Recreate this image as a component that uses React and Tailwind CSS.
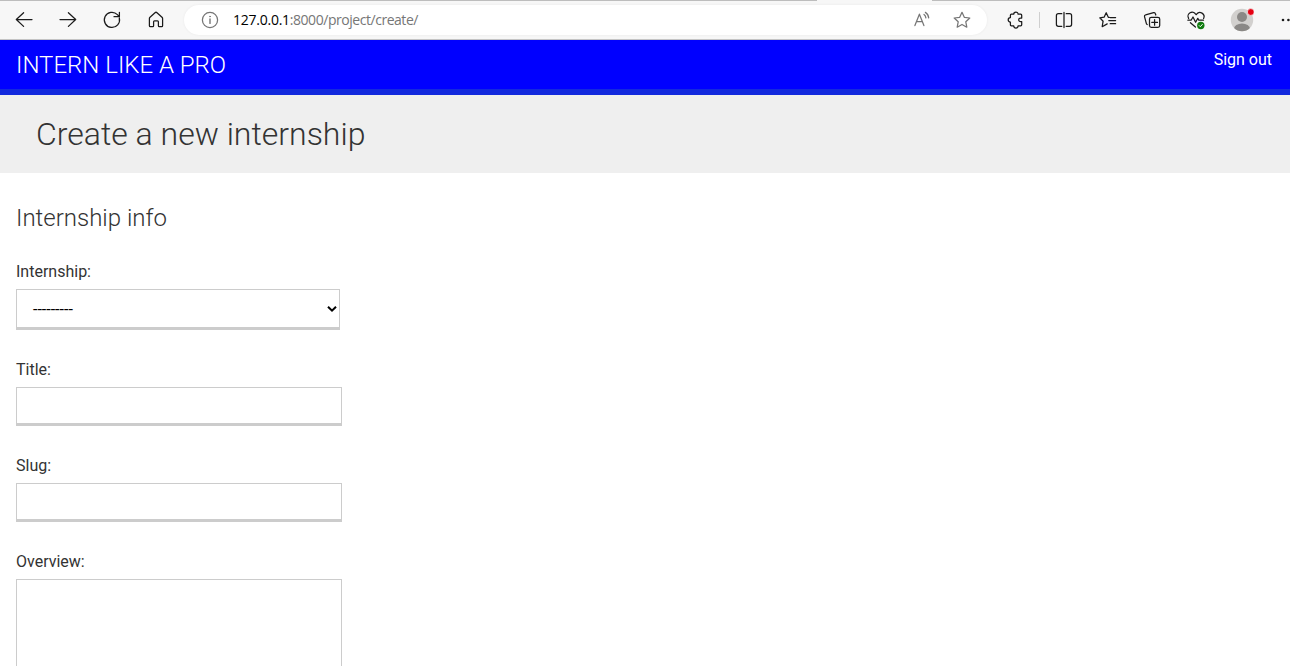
import React from 'react';

function Icon({ children, className = 'text-[#1b1b1b]', label }) {
  return (
    <button type="button" aria-label={label} className={`flex h-9 w-11 shrink-0 items-center justify-center ${className}`}>
      <svg viewBox="0 0 24 24" className="size-6" fill="none" stroke="currentColor" strokeWidth="1.25" strokeLinecap="round" strokeLinejoin="round">
        {children}
      </svg>
    </button>
  );
}

const starPath =
  'M12 4.3l2.3 5 5.5.7-4 3.8 1 5.4-4.8-2.7-4.8 2.7 1-5.4-4-3.8 5.5-.7z';

function Toolbar() {
  return (
    <div className="h-10 w-[1290px] shrink-0 border-b border-[#c4c4c4] bg-[#f7f7f7]">
      <div className="flex h-px">
        <div className="w-[817px] bg-[#bdbdbd]" />
        <div className="w-[115px] bg-[#f7f7f7]" />
        <div className="grow bg-[#bdbdbd]" />
      </div>
      <div className="flex h-[38px] items-center pl-0.5">
        <Icon label="Back">
          <path d="M20 11.5H4.3M11.6 4.7L4.3 11.5l7.3 6.9" />
        </Icon>
        <Icon label="Forward">
          <path d="M4 11.5h15.7M12.4 4.7l7.3 6.8-7.3 6.9" />
        </Icon>
        <Icon label="Refresh">
          <path d="M19.3 10a7.6 7.6 0 1 1-1.9-3.4l1.9 2M19.4 4.3v4.4H14" />
        </Icon>
        <Icon label="Home">
          <path d="M5.4 10.6c0-.6.2-1 .6-1.4l5-4.5a1.5 1.5 0 0 1 2 0l5 4.5c.4.4.6.8.6 1.4v7.2c0 .5-.4.9-.9.9h-2.4c-.5 0-.9-.4-.9-.9v-4c0-.5-.4-.9-.9-.9h-3c-.5 0-.9.4-.9.9v4c0 .5-.4.9-.9.9H6.3a.9.9 0 0 1-.9-.9z" />
        </Icon>
        <div className="ml-1.5 flex h-[30px] w-[803px] shrink-0 items-center rounded-full bg-white pl-1 pr-[3px] shadow-[0_0_3px_rgba(0,0,0,0.06)]">
          <Icon label="Site information" className="text-[#767676]">
            <circle cx="12" cy="12" r="7.6" />
            <path d="M12 11v4.4" strokeWidth="1.4" />
            <circle cx="12" cy="8.6" r=".5" fill="currentColor" strokeWidth=".6" />
          </Icon>
          <div className="ml-[1px] grow whitespace-nowrap font-['Open_Sans','Noto_Sans',sans-serif] text-[14px] leading-5 text-[#767676]">
            <span className="tracking-[-0.25px] text-black">127.0.0.1</span>
            <span className="tracking-[-0.46px]">:8000/project/create/</span>
          </div>
          <div className="flex shrink-0">
            <Icon label="Read aloud" className="-mr-1 text-[#767676]">
              <path d="M4.9 17.6L9.4 6.2l4.5 11.4M6.5 13.7h5.8M14 6.4c1 .7 1.7 1.9 1.9 3.4M15.4 4.4c1.9 1.2 3.1 3.2 3.3 5.5" />
            </Icon>
            <Icon label="Add to favorites" className="text-[#767676]">
              <path d={starPath} />
            </Icon>
          </div>
        </div>
        <Icon label="Extensions" className="ml-1.5 text-[#1b1b1b]">
          <path d="M8.4 6.2h2.3a2.2 2.2 0 0 1 4.4 0h2.6c.6 0 1 .4 1 1V10h-1.2a1.8 1.8 0 0 0 0 3.6h1.2v3.2c0 .6-.4 1-1 1h-2.6a2.2 2.2 0 0 1-4.4 0H8.4c-.6 0-1-.4-1-1V14a2.2 2.2 0 0 1 0-4.4V7.2c0-.6.4-1 1-1z" />
        </Icon>
        <div className="ml-0.5 mr-0.5 h-4 w-px bg-[#cfcfcf]" />
        <Icon label="Split screen">
          <path d="M9.8 5.7H6.4c-1.1 0-2 .9-2 2v8.6c0 1.1.9 2 2 2h3.4M14.2 5.7h3.4c1.1 0 2 .9 2 2v8.6c0 1.1-.9 2-2 2h-3.4M12 4.4v15.2" />
        </Icon>
        <Icon label="Favorites">
          <path d="M13.2 9.3h-.9L10.2 4.7 8.1 9.2l-4.3.6 3.3 3.4-.9 5.5 5-2.8M14.2 9.5h5.4M12.8 12.6h6.8M14.2 15.7h5.4" />
        </Icon>
        <Icon label="Collections">
          <path d="M15.8 7l-.4-1.3a1.5 1.5 0 0 0-1.8-1.1L5.6 6.8a1.5 1.5 0 0 0-1.1 1.8l1.9 7c.1.4.4.7.8.9" />
          <rect x="9.5" y="9.3" width="10.2" height="10" rx="1.8" />
          <path d="M14.6 11.5v5.7M11.8 14.4h5.7" />
        </Icon>
        <Icon label="Browser essentials">
          <path d="M4.6 10.4a4.1 4.1 0 0 1 7.1-4.2l.4.5.5-.5a4.1 4.1 0 0 1 7 4.2M3.9 12.2h3.2L9 9l2.6 5.3 2.2-4 1 1.9h4.7M6.4 14.7l5 4.3" />
          <circle cx="16.8" cy="17.5" r="3.7" fill="#107c10" stroke="none" />
          <path d="M15.2 17.6l1.1 1.1 2-2.2" stroke="#fff" strokeWidth="1" />
        </Icon>
        <button type="button" aria-label="Profile" className="ml-0.5 flex h-9 w-11 shrink-0 items-center justify-center">
          <svg viewBox="0 0 24 24" className="size-6">
            <defs>
              <clipPath id="avatar">
                <circle cx="12" cy="12" r="11.2" />
              </clipPath>
            </defs>
            <circle cx="12" cy="12" r="11.2" fill="#d2d0ce" />
            <circle cx="12" cy="9" r="5" fill="#8a8886" />
            <ellipse cx="12" cy="20.6" rx="8" ry="5.2" fill="#8a8886" clipPath="url(#avatar)" />
            <circle cx="20.8" cy="4" r="3.4" fill="#e60012" stroke="#f7f7f7" strokeWidth=".7" />
          </svg>
        </button>
        <button type="button" aria-label="Settings and more" className="ml-[17px] flex h-9 w-[9px] shrink-0 items-center overflow-hidden">
          <svg viewBox="0 0 14 4" className="h-1 w-3.5 shrink-0" fill="#1b1b1b">
            <circle cx="2" cy="2" r="1.3" />
            <circle cx="7.4" cy="2" r="1.3" />
            <circle cx="12.7" cy="2" r="1.3" />
          </svg>
        </button>
      </div>
    </div>
  );
}

function Field({ label, children }) {
  return (
    <div className="flex flex-col items-start">
      <label className="mb-[7px] h-5 text-base leading-5">{label}</label>
      {children}
    </div>
  );
}

export default function App() {
  return (
    <div className="flex h-[666px] w-[1290px] flex-col overflow-hidden bg-white font-[Roboto,sans-serif] text-[#333]">
      <Toolbar />
      <header className="flex h-[55px] shrink-0 justify-between border-b-[6px] border-[#1229dd] bg-[#0000ff] pl-4 pr-[18px] text-white">
        <div className="mt-[10px] text-2xl font-light leading-[30px]">INTERN LIKE A PRO</div>
        <a className="mt-[10px] text-base leading-5">Sign out</a>
      </header>
      <h1 className="h-[78px] shrink-0 bg-[#efefef] pl-9 text-[32px] font-light leading-[78px]">Create a new internship</h1>
      <main className="px-4 pt-[30px]">
        <h2 className="mb-[29px] h-[30px] text-2xl font-light leading-[30px]">Internship info</h2>
        <form className="flex flex-col gap-[30px]">
          <Field label="Internship:">
            <div className="flex h-[41px] w-[324px] items-center justify-between border border-b-[3px] border-[#ccc] pl-4 pr-[2px] text-black">
              <span className="pt-0.5 text-base leading-5">---------</span>
              <svg viewBox="0 0 10 8" className="mt-px h-2 w-2.5" fill="none" stroke="#000" strokeWidth="2">
                <path d="M1 1.7l4 4 4-4" />
              </svg>
            </div>
          </Field>
          <Field label="Title:">
            <input className="h-[39px] w-[326px] border border-b-[3px] border-[#ccc]" />
          </Field>
          <Field label="Slug:">
            <input className="h-[39px] w-[326px] border border-b-[3px] border-[#ccc]" />
          </Field>
          <Field label="Overview:">
            <textarea className="h-[180px] w-[326px] resize-none border border-b-[3px] border-[#ccc]" />
          </Field>
        </form>
      </main>
    </div>
  );
}
